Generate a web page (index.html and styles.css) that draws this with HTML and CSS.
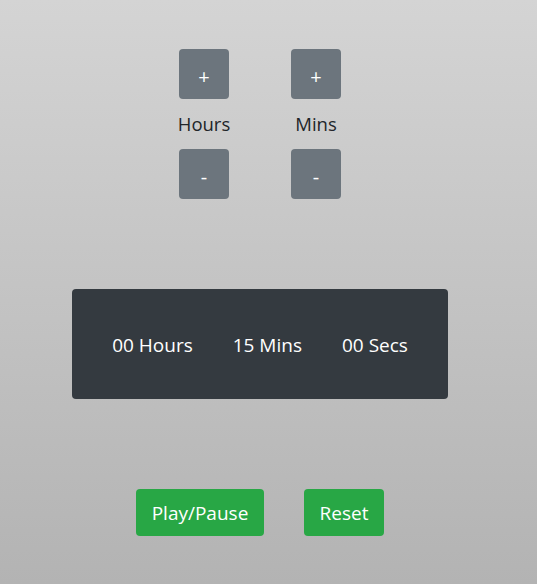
FILE: index.html
```html
<!DOCTYPE html>
<html>
<head>
<meta charset="utf-8">
<link rel="stylesheet" href="styles.css">
</head>
<body>
<main class="app">
  <section class="controls">
    <div class="unit">
      <button class="step">+</button>
      <span class="unit-label">Hours</span>
      <button class="step">-</button>
    </div>
    <div class="unit">
      <button class="step">+</button>
      <span class="unit-label">Mins</span>
      <button class="step">-</button>
    </div>
  </section>
  <section class="display">
    <span>00 Hours</span>
    <span>15 Mins</span>
    <span>00 Secs</span>
  </section>
  <section class="actions">
    <button class="btn-green play">Play/Pause</button>
    <button class="btn-green reset">Reset</button>
  </section>
</main>
</body>
</html>
```
FILE: styles.css
```css
html, body {
  margin: 0;
  padding: 0;
}
body {
  height: 584px;
  background: linear-gradient(to bottom, #d4d4d4 0%, #b3b3b3 100%);
  font-family: "Open Sans", "Noto Sans", sans-serif;
  color: #212529;
}
.app {
  width: 520px;
  display: flex;
  flex-direction: column;
  align-items: center;
  padding-top: 49px;
}
.controls {
  display: flex;
  gap: 32px;
}
.unit {
  width: 80px;
  display: flex;
  flex-direction: column;
  align-items: center;
}
.step {
  width: 50px;
  height: 50px;
  border: none;
  border-radius: 4px;
  background: #6c757d;
  color: #fff;
  font-family: inherit;
  font-size: 20px;
  padding: 4px 0 0;
}
.unit-label {
  height: 50px;
  line-height: 50px;
  font-size: 18.5px;
}
.display {
  margin-top: 90px;
  width: 376px;
  height: 110px;
  border-radius: 4px;
  background: #343a40;
  color: #fff;
  display: flex;
  align-items: center;
  justify-content: center;
  gap: 40px;
  font-size: 19px;
  padding-top: 2px;
  box-sizing: border-box;
}
.actions {
  margin-top: 90px;
  display: flex;
  gap: 40px;
}
.btn-green {
  height: 47px;
  border: none;
  border-radius: 4px;
  background: #28a745;
  color: #fff;
  font-family: inherit;
  font-size: 19px;
  padding: 0;
}
.play { width: 128px; }
.reset { width: 80px; }
```
